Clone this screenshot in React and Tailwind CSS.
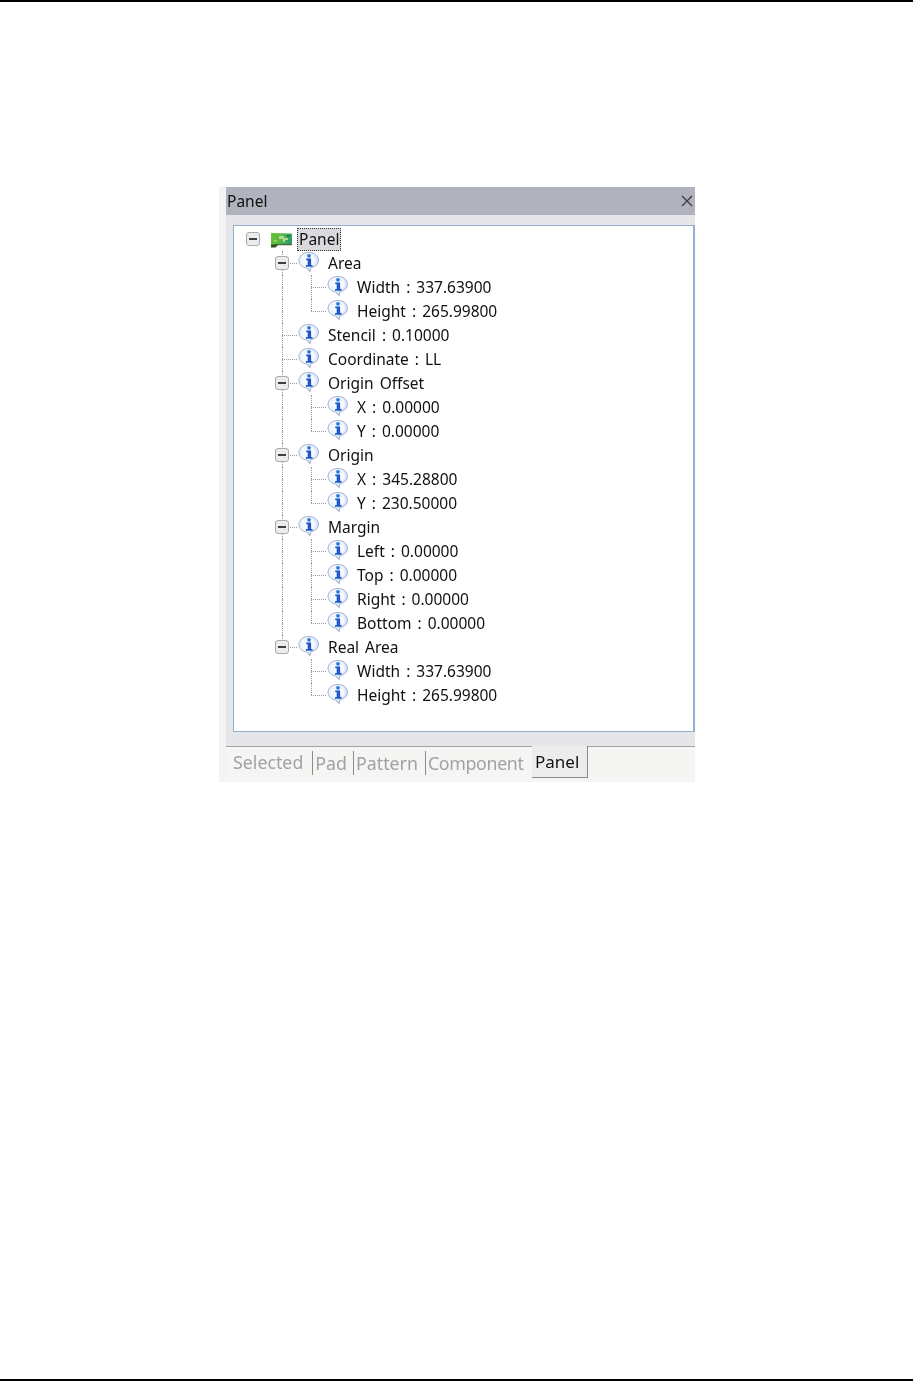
const TREE = [
  { label: "Area", kids: ["Width : 337.63900", "Height : 265.99800"] },
  { label: "Stencil : 0.10000" },
  { label: "Coordinate : LL" },
  { label: "Origin Offset", kids: ["X : 0.00000", "Y : 0.00000"] },
  { label: "Origin", kids: ["X : 345.28800", "Y : 230.50000"] },
  { label: "Margin", kids: ["Left : 0.00000", "Top : 0.00000", "Right : 0.00000", "Bottom : 0.00000"] },
  { label: "Real Area", kids: ["Width : 337.63900", "Height : 265.99800"] },
];

function InfoIcon() {
  return (
    <svg width="22" height="24" viewBox="0 0 22 24" className="shrink-0">
      <defs>
        <radialGradient id="bubble" cx="0.45" cy="0.4" r="0.65">
          <stop offset="0" stopColor="#ffffff" />
          <stop offset="0.6" stopColor="#eef3fd" />
          <stop offset="1" stopColor="#a9bdea" />
        </radialGradient>
      </defs>
      <path d="M11 1.500C5 1.500 1 5 1 9.500c0 4.200 3.600 7.200 8 7.500l2 3c.5.800 1.600.6 1.600-.4l-.2-2.700c4.800-.7 8.100-3.700 8.100-7.400C20.500 5 16.700 1.500 11 1.500z" fill="url(#bubble)" stroke="#a8b4cf" strokeWidth="1" />
      <circle cx="11" cy="4.800" r="1.900" fill="#2f74e0" />
      <path d="M8.200 7.500h4.900v6.500h1.500v1.700H8v-1.700h1.700V9.300H8.200z" fill="#1b58cc" />
    </svg>
  );
}

function BoardIcon() {
  return (
    <svg width="23" height="16" viewBox="0 0 23 16" className="mt-px shrink-0">
      <defs>
        <linearGradient id="board" x1="0" y1="0" x2="1" y2="0.300">
          <stop offset="0" stopColor="#63c52f" />
          <stop offset="0.55" stopColor="#58b548" />
          <stop offset="1" stopColor="#2f9c68" />
        </linearGradient>
      </defs>
      <path d="M1 1l21 .5V12H5l-4 3.500z" fill="url(#board)" />
      <path d="M1 12.500v3h4.500l3-3z" fill="#2e4f22" />
      <path d="M5 12h17v1.300H4z" fill="#3b6a34" />
      <path d="M9 4h5v2h4v2h-3v2h-2V7H9z" fill="#b6d98b" />
      <rect x="17" y="3" width="3" height="2" fill="#1f7a55" />
      <rect x="4" y="8" width="3" height="2" fill="#8fd84e" />
    </svg>
  );
}

function Expander() {
  return (
    <span className="relative z-10 flex h-[14px] w-[14px] items-center justify-center rounded-[3px] border border-[#a9acb2] bg-[#ececec]">
      <span className="h-[2px] w-[8px] bg-[#3f3f3f]" />
    </span>
  );
}

// one 29px cell of the tree gutter, dotted lines drawn by borders
function Cell({ up, down, right, box }) {
  return (
    <div className="relative flex h-6 w-[29px] shrink-0 items-center justify-center pr-[2px]">
      {up && <span className="absolute left-[14px] top-0 h-3 border-l border-dotted border-[#9c9c8c]" />}
      {down && <span className="absolute bottom-0 left-[14px] h-3 border-l border-dotted border-[#9c9c8c]" />}
      {right && <span className="absolute left-[14px] top-3 w-[15px] border-t border-dotted border-[#9c9c8c]" />}
      {box && <Expander />}
    </div>
  );
}

function Row({ cells, children }) {
  return (
    <div className="flex h-6 items-center">
      {cells}
      <InfoIcon />
      <span className="ml-2 whitespace-nowrap pt-[2px]">{children}</span>
    </div>
  );
}

function Tree() {
  return (
    <div className="pl-[5px] pt-[1px]">
      <div className="flex h-6 items-center">
        <Cell box />
        <div className="ml-[2px] mr-[4px]"><BoardIcon /></div>
        <span className="flex h-[23px] items-center whitespace-nowrap border border-dotted border-[#333333] bg-[#d9d9de] px-px pt-[2px]">Panel</span>
      </div>
      {TREE.map((node, i) => {
        const last = i === TREE.length - 1;
        return (
          <div key={i}>
            <Row cells={<><Cell /><Cell up down={!last} right box={!!node.kids} /><span className="w-px" /></>}>{node.label}</Row>
            {node.kids && node.kids.map((kid, k) => (
              <Row key={k} cells={<><Cell /><Cell up={!last} down={!last} /><Cell up down={k < node.kids.length - 1} right /><span className="w-px" /></>}>{kid}</Row>
            ))}
          </div>
        );
      })}
    </div>
  );
}

export default function App() {
  return (
    <div className="flex h-[1381px] w-[913px] flex-col justify-between bg-white font-['Noto_Sans',sans-serif] text-[15.5px] leading-none text-[#111111] [word-spacing:2px]">
      <div className="h-[2px] bg-black" />
      <div className="flex-1 pl-[219px] pt-[185px]">
        <div className="w-[476px] bg-[#f3f3f5] pl-[7px] blur-[0.3px]">
          <div className="flex h-[28px] items-center justify-between bg-[#b0b2bd] pl-px pr-[2px]">
            <span className="pt-[2px]">Panel</span>
            <svg width="12" height="12" viewBox="0 0 12 12" fill="none" stroke="#3c3c44" strokeWidth="1.300">
              <path d="M1 1l10 10M11 1L1 11" />
            </svg>
          </div>
          <div className="bg-[#e6e6e9] pb-[14px] pl-[7px] pt-[10px]">
            <div className="h-[507px] border border-r-2 border-[#8fb0cf] bg-white">
              <Tree />
            </div>
          </div>
          <div className="flex h-[36px] items-start border-t border-[#a3a3a3] bg-[#f5f5f3]">
            <div className="flex h-[31px] w-[306px] items-center pl-[7px] text-[17.800px] text-[#a2a2a2]">
              <span className="mr-[9px]">Selected</span>
              <span className="mr-[6px] border-l border-[#8c8c8c] pl-[2px] leading-[24px]">Pad</span>
              <span className="mr-[7px] border-l border-[#8c8c8c] pl-[2px] leading-[24px]">Pattern</span>
              <span className="border-l border-[#8c8c8c] pl-[2px] leading-[24px] tracking-[-0.35px]">Component</span>
            </div>
            <div className="-mt-px flex h-[32px] w-[56px] items-center border-b border-r border-[#8a8a8a] bg-[#ececec] pl-[3px] text-[17px] text-[#111111]">Panel</div>
          </div>
        </div>
      </div>
      <div className="h-[2px] bg-black" />
    </div>
  );
}
